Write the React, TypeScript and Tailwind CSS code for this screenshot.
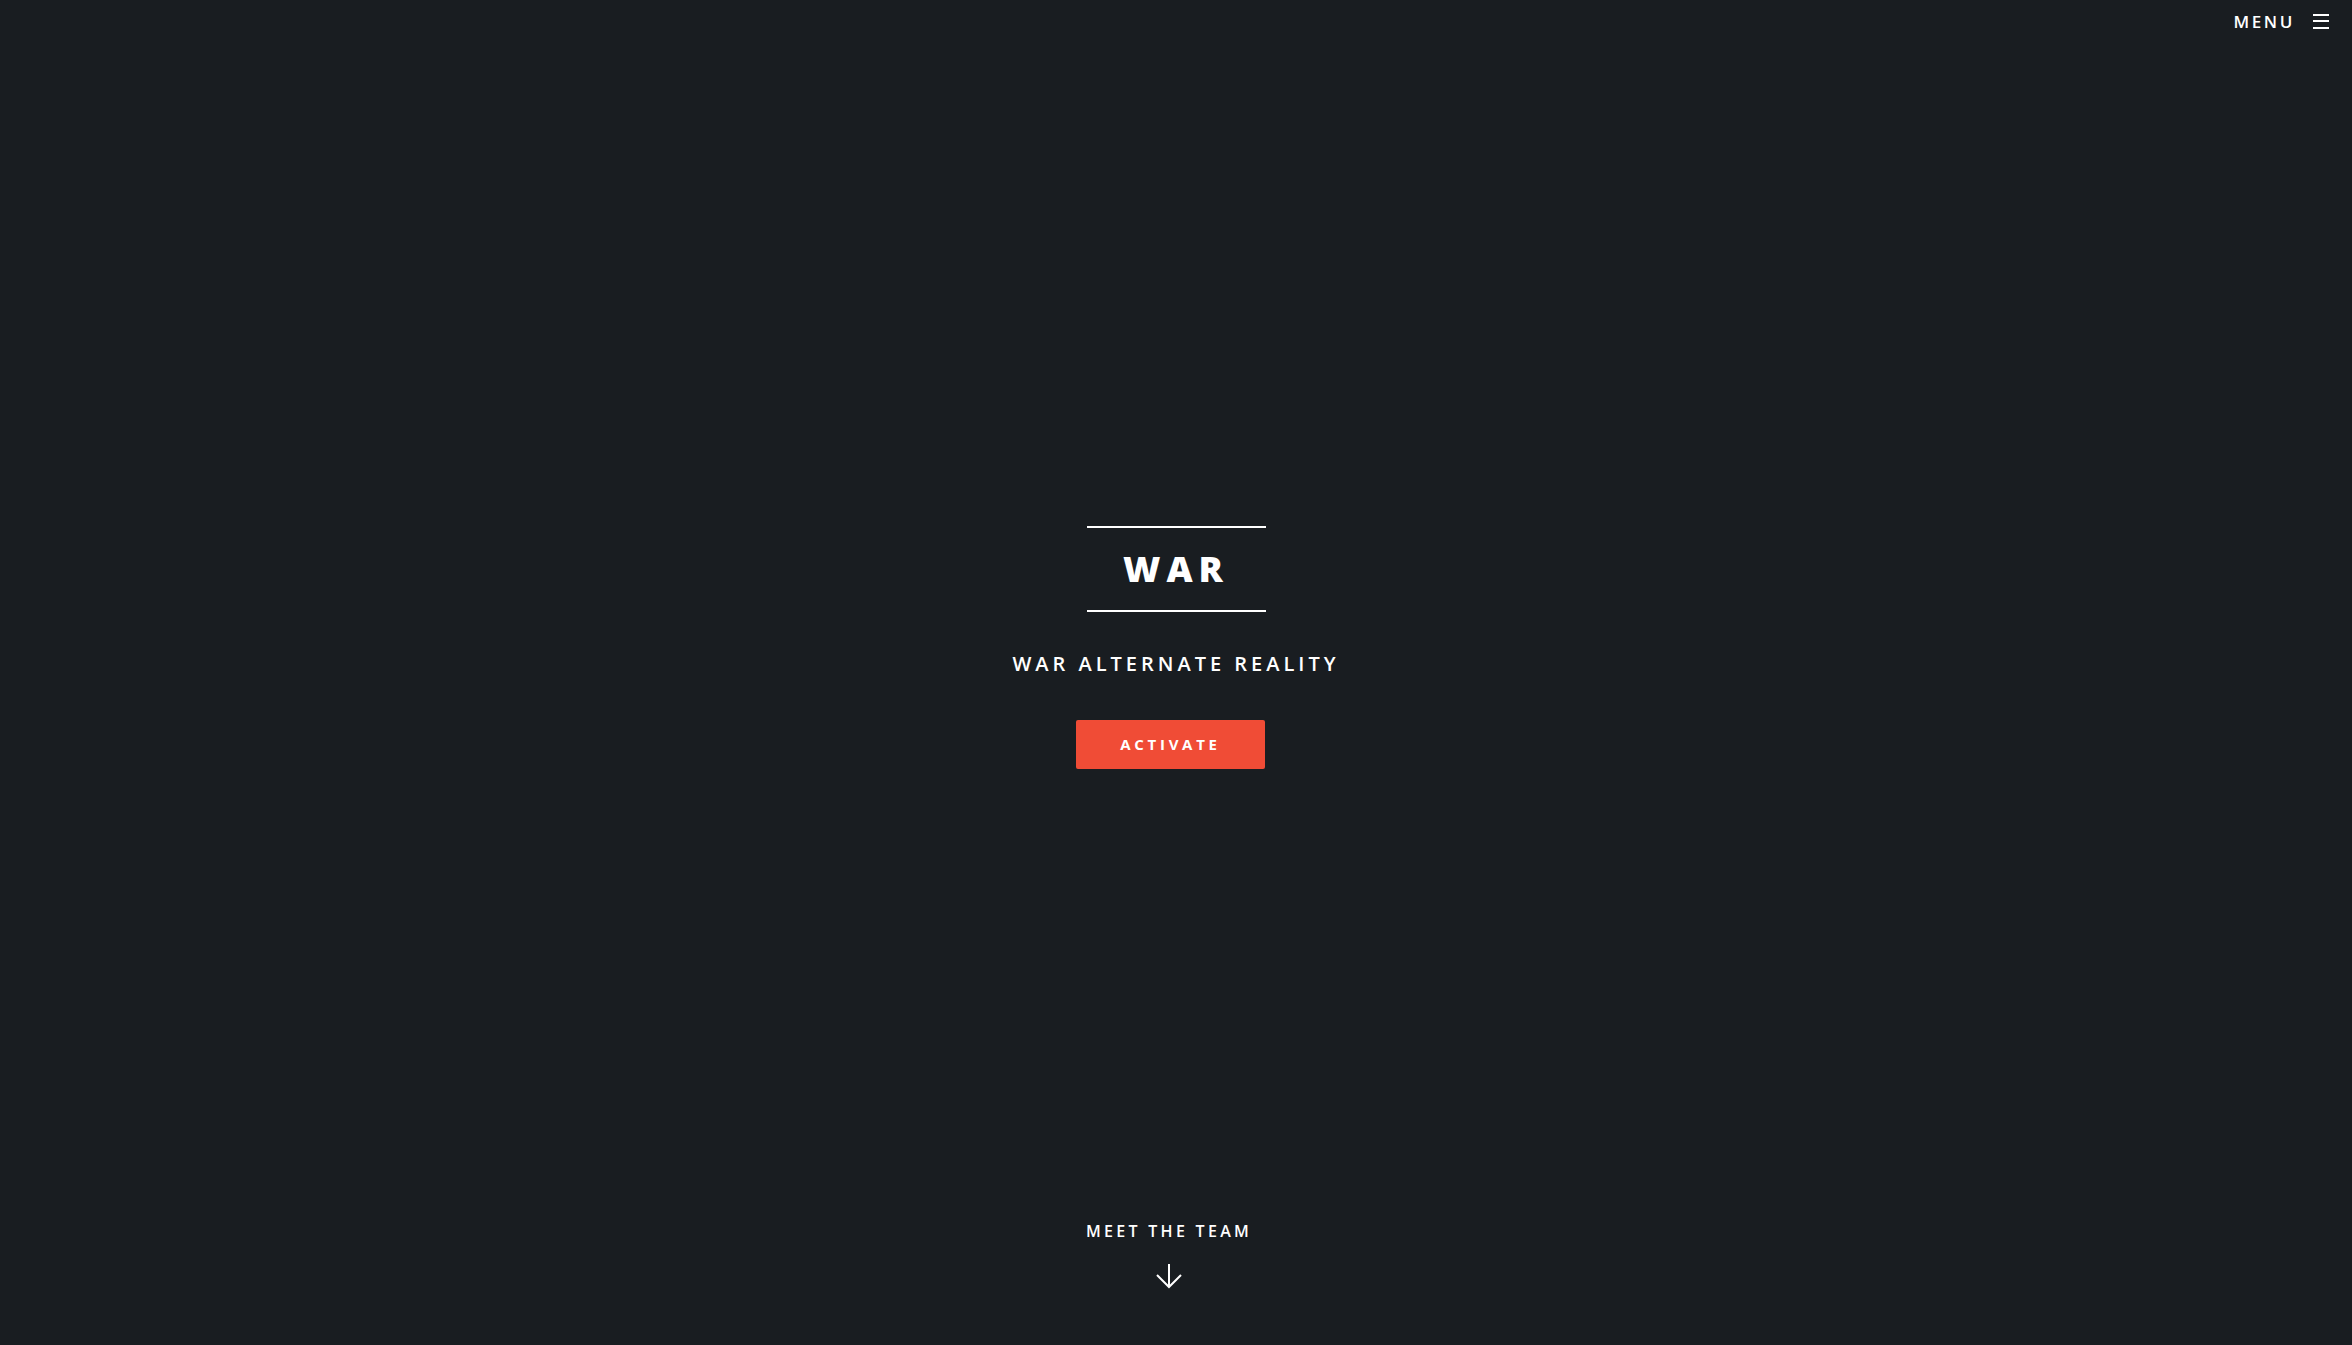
export default function App() {
  return (
    <div className="flex min-h-screen flex-col bg-[#191d21] text-white font-['Open_Sans',sans-serif]">
      <header className="flex h-[42px] items-center justify-end pr-[23px]">
        <button className="flex items-center gap-[18px] text-[17px] font-semibold uppercase tracking-[2.6px] leading-none">
          MENU
          <span className="flex w-4 flex-col gap-[4.5px]">
            <span className="h-[2px] w-4 bg-white" />
            <span className="h-[2px] w-4 bg-white" />
            <span className="h-[2px] w-4 bg-white" />
          </span>
        </button>
      </header>

      <main className="flex flex-1 flex-col items-center justify-center pt-[30px]">
        <div className="flex w-[179px] flex-col items-center border-y-2 border-white py-[23px]">
          <h1 className="text-[36px] font-extrabold uppercase leading-[36px] tracking-[6px]">
            WAR
          </h1>
        </div>
        <p className="mt-[42px] text-[20px] font-semibold uppercase leading-none tracking-[4px]">
          WAR ALTERNATE REALITY
        </p>
        <button className="-ml-[11px] mt-[46px] h-[49px] w-[189px] rounded-[2px] bg-[#f04c36] text-[15px] font-bold uppercase tracking-[3.7px]">
          ACTIVATE
        </button>
      </main>

      <footer className="flex flex-col items-center pb-[56px] pr-[14px]">
        <span className="text-[16px] font-semibold uppercase leading-none tracking-[3.3px]">
          MEET THE TEAM
        </span>
        <svg
          width="26"
          height="26"
          viewBox="0 0 26 26"
          fill="none"
          stroke="white"
          strokeWidth="2"
          className="mt-[24px]"
        >
          <path d="M13 1v23" />
          <path d="M1 12l12 12 12-12" />
        </svg>
      </footer>
    </div>
  );
}
